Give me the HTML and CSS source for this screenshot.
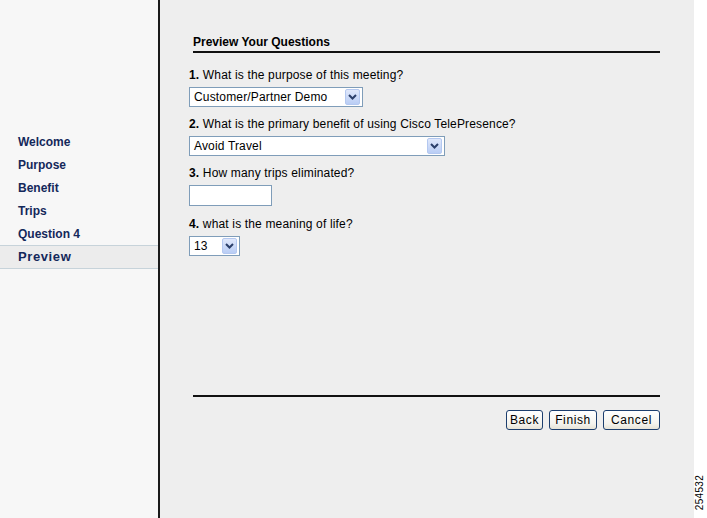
FILE: index.html
```html
<!DOCTYPE html>
<html>
<head>
<meta charset="utf-8">
<link rel="stylesheet" href="styles.css">
</head>
<body>
<div class="app">
  <nav class="sidebar">
    <ul class="nav">
      <li class="nav-item">Welcome</li>
      <li class="nav-item">Purpose</li>
      <li class="nav-item">Benefit</li>
      <li class="nav-item">Trips</li>
      <li class="nav-item">Question 4</li>
      <li class="nav-item active">Preview</li>
    </ul>
  </nav>
  <main class="main">
    <div class="panel">
      <h1 class="title">Preview Your Questions</h1>
      <div class="question">
        <div class="q-label"><b>1.</b> What is the purpose of this meeting?</div>
        <div class="select w1"><span class="sel-text">Customer/Partner Demo</span><span class="arrow"><svg width="9" height="6" viewBox="0 0 9 6"><path d="M1 1 L4.5 4.5 L8 1" fill="none" stroke="#2b3f6a" stroke-width="2"/></svg></span></div>
      </div>
      <div class="question">
        <div class="q-label"><b>2.</b> What is the primary benefit of using Cisco TelePresence?</div>
        <div class="select w2"><span class="sel-text">Avoid Travel</span><span class="arrow"><svg width="9" height="6" viewBox="0 0 9 6"><path d="M1 1 L4.5 4.5 L8 1" fill="none" stroke="#2b3f6a" stroke-width="2"/></svg></span></div>
      </div>
      <div class="question">
        <div class="q-label"><b>3.</b> How many trips eliminated?</div>
        <div class="input"></div>
      </div>
      <div class="question">
        <div class="q-label"><b>4.</b> what is the meaning of life?</div>
        <div class="select w4"><span class="sel-text">13</span><span class="arrow"><svg width="9" height="6" viewBox="0 0 9 6"><path d="M1 1 L4.5 4.5 L8 1" fill="none" stroke="#2b3f6a" stroke-width="2"/></svg></span></div>
      </div>
      <div class="spacer"></div>
      <div class="footer">
        <button class="btn b-back">Back</button>
        <button class="btn b-finish">Finish</button>
        <button class="btn b-cancel">Cancel</button>
      </div>
    </div>
  </main>
  <aside class="margin">
    <span class="fig">254532</span>
  </aside>
</div>
</body>
</html>
```

FILE: styles.css
```css
html, body {
  margin: 0;
  padding: 0;
  height: 100%;
}
body {
  font-family: "Liberation Sans", Arial, sans-serif;
  font-size: 12px;
  color: #000;
  background: #fff;
}
.app {
  display: flex;
  height: 518px;
}
.sidebar {
  width: 158px;
  background: #f7f7f7;
  border-right: 2px solid #1a1a1a;
  flex: none;
}
.nav {
  list-style: none;
  margin: 0;
  padding: 0;
  padding-top: 131px;
}
.nav-item {
  height: 23px;
  line-height: 23px;
  padding-left: 18px;
  font-weight: bold;
  font-size: 12px;
  color: #14285a;
}
.nav-item.active {
  margin-top: -1px;
  background: #ececec;
  border-top: 1px solid #c7d3da;
  border-bottom: 1px solid #c7d3da;
  height: 22px;
  line-height: 22px;
  font-size: 13px;
  letter-spacing: 0.6px;
}
.main {
  flex: 1;
  background: #eeeeee;
}
.margin {
  width: 13px;
  flex: none;
  background: #fff;
  position: relative;
}
.fig {
  position: absolute;
  left: 0;
  bottom: 8px;
  writing-mode: vertical-rl;
  transform: rotate(180deg);
  font-size: 10px;
  font-family: "Liberation Sans", Arial, sans-serif;
  letter-spacing: 0.3px;
}
.panel {
  display: flex;
  flex-direction: column;
  height: 100%;
  box-sizing: border-box;
  padding: 35px 34px 0 29px;
}
.title {
  font-size: 12px;
  font-weight: bold;
  margin: 0 0 0 4px;
  padding-bottom: 2px;
  border-bottom: 2px solid #111;
  line-height: 14px;
}
.q-label {
  margin-top: 10px;
  line-height: 14px;
  letter-spacing: 0.16px;
}
.question:first-of-type .q-label {
  margin-top: 15px;
}
.select, .input {
  margin-top: 5px;
  height: 20px;
  box-sizing: border-box;
  border: 1px solid #7f9db9;
  background: #fff;
  display: flex;
  align-items: center;
}
.sel-text {
  flex: 1;
  padding-left: 4px;
  font-size: 12px;
  letter-spacing: 0.16px;
}
.arrow {
  width: 15px;
  height: 16px;
  margin-right: 2px;
  box-sizing: border-box;
  border: 1px solid #b4c8f0;
  border-radius: 2px;
  background: linear-gradient(#e0e8fb, #b9cdf5);
  display: flex;
  align-items: center;
  justify-content: center;
}
.w1 { width: 174px; }
.w2 { width: 256px; }
.w4 { width: 51px; }
.input {
  width: 83px;
  height: 21px;
  margin-bottom: 1px;
}
.spacer { flex: 1; }
.footer {
  margin-left: 4px;
  border-top: 2px solid #111;
  display: flex;
  justify-content: flex-end;
  gap: 6px;
  padding-top: 13px;
  margin-bottom: 88px;
}
.btn {
  font-family: "Liberation Sans", Arial, sans-serif;
  font-size: 12px;
  height: 20px;
  padding: 0;
  letter-spacing: 0.6px;
  border: 1px solid #1c3e6e;
  border-radius: 3px;
  background: linear-gradient(#ffffff, #f4f3ee 70%, #e6e3d6);
  color: #000;
}
.b-back { width: 37px; }
.b-finish { width: 48px; }
.b-cancel { width: 57px; }
```
